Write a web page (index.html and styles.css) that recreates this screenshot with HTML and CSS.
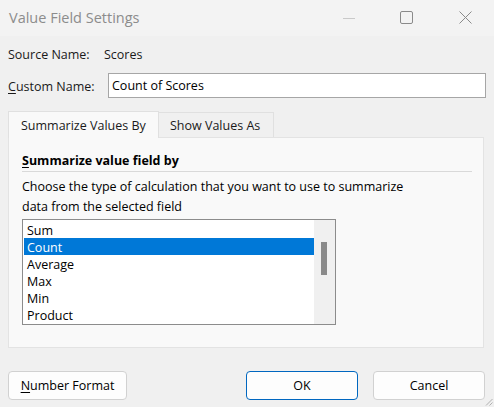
FILE: index.html
```html
<!DOCTYPE html>
<html>
<head>
<meta charset="utf-8">
<link rel="stylesheet" href="styles.css">
</head>
<body>
<div class="window">
  <div class="titlebar">
    <div class="title">Value Field Settings</div>
    <div class="caption">
      <div class="cap-btn"><svg width="12" height="12" viewBox="0 0 12 12"><line x1="0" y1="6.5" x2="12" y2="6.5" stroke="#c9c9c9" stroke-width="1"/></svg></div>
      <div class="cap-btn max"><svg width="13" height="13" viewBox="0 0 13 13"><rect x="0.5" y="0.5" width="12" height="12" rx="1.5" fill="none" stroke="#8a8a8a" stroke-width="1"/></svg></div>
      <div class="cap-btn"><svg width="13" height="13" viewBox="0 0 13 13"><path d="M0.5 0.5 L12.5 12.5 M12.5 0.5 L0.5 12.5" stroke="#8a8a8a" stroke-width="1"/></svg></div>
    </div>
  </div>
  <div class="main">
    <div class="row source-row">
      <span class="label src-label">Source Name:</span>
      <span>Scores</span>
    </div>
    <div class="row custom-row">
      <span class="label cust-label"><u>C</u>ustom Name:</span>
      <div class="input">Count of Scores</div>
    </div>
    <div class="tabs">
      <div class="tab active">Summarize Values By</div>
      <div class="tab">Show Values As</div>
    </div>
    <div class="panel">
      <div class="heading"><u>S</u>ummarize value field by</div>
      <div class="sep"></div>
      <div class="desc">Choose the type of calculation that you want to use to summarize<br>data from the selected field</div>
      <div class="listbox">
        <div class="items">
          <div class="item">Sum</div>
          <div class="item selected">Count</div>
          <div class="item">Average</div>
          <div class="item">Max</div>
          <div class="item">Min</div>
          <div class="item">Product</div>
        </div>
        <div class="scrollbar"><div class="thumb"></div></div>
      </div>
    </div>
    <div class="buttons">
      <div class="btn numfmt"><u>N</u>umber Format</div>
      <div class="spacer"></div>
      <div class="btn ok">OK</div>
      <div class="btn cancel">Cancel</div>
    </div>
  </div>
  <div class="grip"><svg width="8" height="8" viewBox="0 0 8 8"><path d="M7.5 1 L1 7.5 M7.5 4.5 L4.5 7.5" stroke="#b0b0b0" stroke-width="1"/></svg></div>
</div>
</body>
</html>
```

FILE: styles.css
```css
* { box-sizing: border-box; }
html, body { margin: 0; padding: 0; }
body {
  width: 494px;
  height: 407px;
  background: #f0f0f0;
  font-family: "Open Sans", "Noto Sans", "DejaVu Sans", sans-serif;
  font-size: 12.5px;
  color: #1a1a1a;
  overflow: hidden;
}
u { text-decoration: underline; text-underline-offset: 2px; }
.window { position: relative; width: 494px; height: 407px; }
.titlebar {
  height: 36px;
  background: #f3f3f3;
  display: flex;
  align-items: center;
}
.title {
  padding-left: 9px;
  font-size: 14.5px;
  color: #8c8c8c;
  flex: 1;
  padding-bottom: 1px;
}
.caption { display: flex; height: 36px; }
.cap-btn {
  width: 58px;
  height: 36px;
  display: flex;
  align-items: center;
  justify-content: center;
  padding-bottom: 1px;
}
.cap-btn.max { padding-right: 2px; }
.main { padding: 0 8px; }
.row { display: flex; align-items: center; }
.source-row { margin-top: 10px; height: 17px; line-height: 17px; }
.src-label { width: 96px; }
.custom-row { margin-top: 10px; height: 25px; }
.cust-label { width: 100px; padding-top: 1px; }
.input {
  flex: 1;
  height: 25px;
  border: 1px solid #a6a6a6;
  background: #fff;
  padding-left: 3px;
  line-height: 23px;
  color: #000;
}
.tabs {
  margin-top: 13px;
  display: flex;
  align-items: flex-end;
  height: 26px;
}
.tab {
  height: 25px;
  border: 1px solid #e0e0e0;
  border-bottom: none;
  background: #f0f0f0;
  padding: 0 11px 0 11px;
  line-height: 25px;
  color: #1a1a1a;
}
.tab.active {
  height: 27px;
  width: 151px;
  background: #f9f9f9;
  padding-left: 12px;
  line-height: 27px;
  position: relative;
  z-index: 1;
  margin-bottom: -1px;
}
.tab + .tab { margin-left: -1px; width: 116px; }
.panel {
  width: 476px;
  height: 211px;
  background: #f9f9f9;
  border: 1px solid #e3e3e3;
  padding: 14px 11px 0 13px;
}
.heading { font-weight: bold; line-height: 17px; height: 17px; color: #000; }
.sep { height: 1px; background: #d9d9d9; margin-top: 2px; }
.desc { margin-top: 5px; line-height: 20px; color: #000; }
.listbox {
  margin-top: 2px;
  width: 314px;
  height: 106px;
  border: 1px solid #8c8c8c;
  background: #fff;
  display: flex;
}
.items { flex: 1; padding: 1px 0 0 1px; }
.item { height: 17px; line-height: 19px; padding-left: 3px; color: #000; }
.item.selected { background: #0078d7; color: #fff; }
.scrollbar { width: 21px; background: #f0f0f0; position: relative; }
.thumb {
  position: absolute;
  left: 7px;
  top: 22px;
  width: 6px;
  height: 33px;
  background: #8a8a8a;
}
.buttons { display: flex; margin-top: 23px; height: 29px; }
.btn {
  height: 29px;
  border: 1px solid #d1d1d1;
  border-radius: 4px;
  background: #fdfdfd;
  display: flex;
  align-items: center;
  justify-content: center;
  color: #000;
  padding-bottom: 1px;
}
.numfmt { width: 119px; }
.spacer { flex: 1; }
.ok { width: 112px; border-color: #0067c0; }
.cancel { width: 112px; margin-left: 15px; margin-right: 1px; }
.grip { position: absolute; right: 1px; bottom: 1px; width: 8px; height: 8px; }
.grip svg { display: block; }
```
